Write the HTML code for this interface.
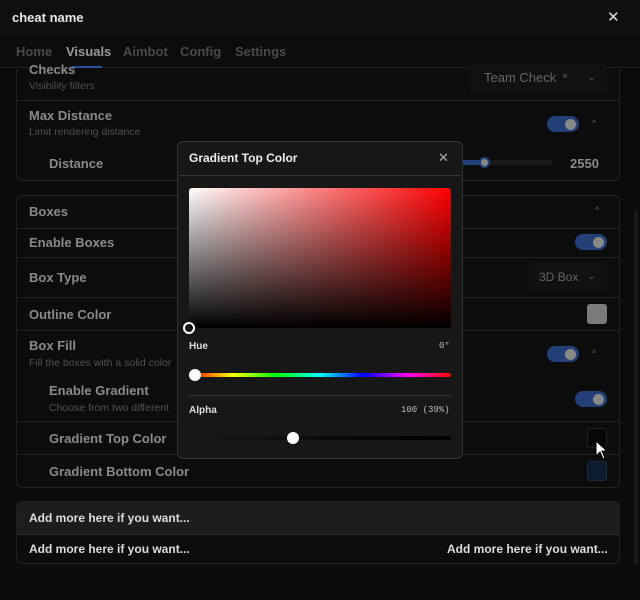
<!DOCTYPE html><html><head><style>
*{box-sizing:border-box;margin:0;padding:0}
body{width:640px;height:600px;background:#0b0b0b;font-family:"Liberation Sans",sans-serif;position:relative;overflow:hidden;color:#888}
.a{position:absolute}
.t{font-size:13px;font-weight:bold;color:#8a8a8a}
.s{font-size:10.5px;color:#505050}
.card{position:absolute;left:16px;width:604px;border:1px solid #222;border-radius:6px;background:#0c0c0c}
.hr{position:absolute;left:17px;width:602px;height:1px;background:#222}
.tg{position:absolute;width:32px;height:16px;border-radius:8px;background:#233f78}
.tg:after{content:"";position:absolute;right:3px;top:3px;width:11px;height:11px;border-radius:50%;background:#888}
.chev{position:absolute;font-size:9px;color:#666}
</style></head><body>
<div class="a" style="left:0;top:0;width:640px;height:36px;background:#0f0f0f"></div>
<div class="a" style="left:12px;top:10px;font-size:13px;font-weight:bold;color:#e8e8e8">cheat name</div>
<div class="a" style="left:607px;top:8px;font-size:15px;color:#ddd">✕</div>
<div class="a" style="left:0;top:36px;width:640px;height:32px;background:#0c0c0c;border-bottom:1px solid #1e1e1e"></div>
<div class="a" style="left:16px;top:44px;font-size:13px;font-weight:bold;color:#4a4a4a">Home</div>
<div class="a" style="left:66px;top:44px;font-size:13px;font-weight:bold;color:#9a9a9a">Visuals</div>
<div class="a" style="left:72px;top:66px;width:30px;height:2px;background:#2b4f9a"></div>
<div class="a" style="left:123px;top:44px;font-size:13px;font-weight:bold;color:#4a4a4a">Aimbot</div>
<div class="a" style="left:180px;top:44px;font-size:13px;font-weight:bold;color:#4a4a4a">Config</div>
<div class="a" style="left:235px;top:44px;font-size:13px;font-weight:bold;color:#4a4a4a">Settings</div>
<div class="a" style="left:634px;top:210px;width:4px;height:355px;background:#1a1a1a;border-radius:2px"></div>
<!-- card 1 -->
<div class="card" style="top:40px;height:141px;border-top:none;clip-path:inset(29px 0 0 0)"></div>
<div class="a t" style="left:29px;top:62px">Checks</div>
<div class="a s" style="left:29px;top:80px">Visibility filters</div>
<div class="a" style="left:469px;top:64px;width:138px;height:28px;background:#111;border-radius:4px"></div>
<div class="a" style="left:484px;top:70px;font-size:13px;color:#666">Team Check</div>
<div class="a" style="left:562px;top:71px;font-size:10px;color:#666">×</div>
<div class="chev" style="left:588px;top:72px">⌄</div>
<div class="hr" style="top:100px"></div>
<div class="a t" style="left:29px;top:108px">Max Distance</div>
<div class="a s" style="left:29px;top:126px">Limit rendering distance</div>
<div class="tg" style="left:547px;top:116px"></div>
<div class="chev" style="left:592px;top:118px">^</div>
<div class="a t" style="left:49px;top:156px">Distance</div>
<div class="a" style="left:450px;top:160px;width:35px;height:5px;background:#233f78"></div>
<div class="a" style="left:485px;top:160px;width:67px;height:5px;background:#1a1a1a;border-radius:3px"></div>
<div class="a" style="left:479px;top:157px;width:11px;height:11px;border-radius:50%;background:#888;border:2px solid #233f78"></div>
<div class="a t" style="left:570px;top:156px">2550</div>
<!-- card 2 -->
<div class="card" style="top:195px;height:293px"></div>
<div class="a t" style="left:29px;top:204px">Boxes</div>
<div class="chev" style="left:595px;top:205px">^</div>
<div class="hr" style="top:228px"></div>
<div class="a t" style="left:29px;top:235px">Enable Boxes</div>
<div class="tg" style="left:575px;top:234px"></div>
<div class="hr" style="top:257px"></div>
<div class="a t" style="left:29px;top:270px">Box Type</div>
<div class="a" style="left:529px;top:263px;width:78px;height:28px;background:#111;border-radius:4px"></div>
<div class="a" style="left:539px;top:270px;font-size:12px;color:#666">3D Box</div>
<div class="chev" style="left:588px;top:271px">⌄</div>
<div class="hr" style="top:297px"></div>
<div class="a t" style="left:29px;top:307px">Outline Color</div>
<div class="a" style="left:587px;top:304px;width:20px;height:20px;border-radius:3px;background:#7a7a7a"></div>
<div class="hr" style="top:330px"></div>
<div class="a t" style="left:29px;top:338px">Box Fill</div>
<div class="a s" style="left:29px;top:357px">Fill the boxes with a solid color</div>
<div class="tg" style="left:547px;top:346px"></div>
<div class="chev" style="left:592px;top:348px">^</div>
<div class="a t" style="left:49px;top:383px">Enable Gradient</div>
<div class="a s" style="left:49px;top:402px">Choose from two different</div>
<div class="tg" style="left:575px;top:391px"></div>
<div class="hr" style="top:421px"></div>
<div class="a t" style="left:49px;top:431px">Gradient Top Color</div>
<div class="a" style="left:587px;top:428px;width:20px;height:20px;border-radius:3px;background:#070707;border:1px solid #222"></div>
<div class="hr" style="top:454px"></div>
<div class="a t" style="left:49px;top:464px">Gradient Bottom Color</div>
<div class="a" style="left:587px;top:461px;width:20px;height:20px;border-radius:3px;background:#0b1a2e;border:1px solid #1a2a40"></div>
<!-- card 3 -->
<div class="card" style="top:501px;height:63px;overflow:hidden"><div style="height:33px;background:#1d1d1d;border-bottom:1px solid #2a2a2a"></div></div>
<div class="a" style="left:29px;top:511px;font-size:12px;font-weight:bold;color:#ddd">Add more here if you want...</div>
<div class="a" style="left:29px;top:542px;font-size:12px;font-weight:bold;color:#ddd">Add more here if you want...</div>
<div class="a" style="left:447px;top:542px;font-size:12px;font-weight:bold;color:#ddd">Add more here if you want...</div>
<!-- cursor -->
<svg class="a" style="left:595px;top:440px" width="14" height="20" viewBox="0 0 14 20"><path d="M1 1 L1 16 L5 12 L8 19 L10 18 L7 11 L12 11 Z" fill="#fff" stroke="#000"/></svg>
<!-- dialog -->
<div class="a" style="left:177px;top:141px;width:286px;height:318px;background:#171717;border:1px solid #333;border-radius:6px"></div>
<div class="a" style="left:177px;top:175px;width:286px;height:1px;background:#333"></div>
<div class="a" style="left:189px;top:151px;font-size:12px;font-weight:bold;color:#eee">Gradient Top Color</div>
<div class="a" style="left:438px;top:150px;font-size:13px;color:#aaa">✕</div>
<div class="a" style="left:189px;top:188px;width:262px;height:140px;border-radius:3px;background:linear-gradient(to top,#000,rgba(0,0,0,0)),linear-gradient(to right,#fff,#f00)"></div>
<div class="a" style="left:183px;top:322px;width:12px;height:12px;border-radius:50%;border:2px solid #fff;background:transparent"></div>
<div class="a" style="left:189px;top:341px;font-size:10px;font-weight:bold;color:#ddd">Hue</div>
<div class="a" style="left:439px;top:341px;font-size:9px;font-family:'Liberation Mono',monospace;color:#bbb">0°</div>
<div class="a" style="left:189px;top:373px;width:262px;height:4px;border-radius:2px;background:linear-gradient(to right,#f00,#ff0,#0f0,#0ff,#00f,#f0f,#f00)"></div>
<div class="a" style="left:189px;top:369px;width:12px;height:12px;border-radius:50%;background:#fff"></div>
<div class="a" style="left:189px;top:395px;width:262px;height:1px;background:#333"></div>
<div class="a" style="left:189px;top:405px;font-size:10px;font-weight:bold;color:#ddd">Alpha</div>
<div class="a" style="left:401px;top:405px;font-size:9px;font-family:'Liberation Mono',monospace;color:#bbb">100 (39%)</div>
<div class="a" style="left:189px;top:436px;width:262px;height:4px;border-radius:2px;background:linear-gradient(to right,rgba(0,0,0,0),#000)"></div>
<div class="a" style="left:287px;top:432px;width:12px;height:12px;border-radius:50%;background:#fff"></div>
</body></html>
